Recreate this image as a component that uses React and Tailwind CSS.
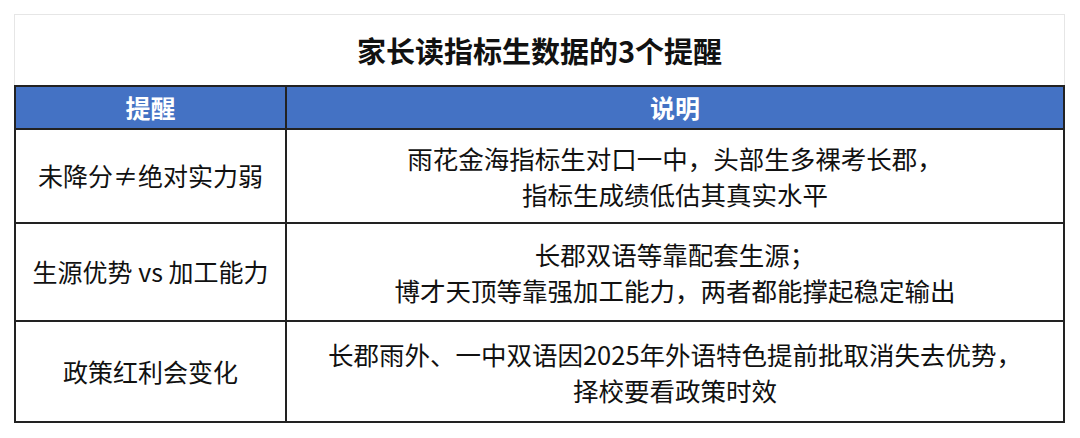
import React from "react";

const font = {
  fontFamily: '"PingFang SC", "Noto Sans CJK SC", "Noto Sans", sans-serif',
};

const rows = [
  {
    h: "h-[94px]",
    left: "未降分≠绝对实力弱",
    right: ["雨花金海指标生对口一中，头部生多裸考长郡，", "指标生成绩低估其真实水平"],
  },
  {
    h: "h-[98px]",
    left: "生源优势 vs 加工能力",
    right: ["长郡双语等靠配套生源；", "博才天顶等靠强加工能力，两者都能撑起稳定输出"],
  },
  {
    h: "h-[101px]",
    left: "政策红利会变化",
    right: ["长郡雨外、一中双语因2025年外语特色提前批取消失去优势，", "择校要看政策时效"],
  },
];

export default function App() {
  return (
    <div className="w-[1080px] h-[438px] bg-white pt-[14px] pl-[14px]" style={font}>
      <div className="w-[1051px]">
        <div className="h-[71px] border border-b-0 border-[#e6e6e6] flex items-center justify-center">
          <h1 className="text-[29px] font-bold text-[#111] leading-none">家长读指标生数据的3个提醒</h1>
        </div>
        <div className="border-2 border-[#222]">
          <div className="flex h-[41px] bg-[#4472c4] text-white font-bold text-[25px]">
            <div className="w-[271px] border-r-2 border-[#222] flex items-center justify-center">提醒</div>
            <div className="flex-1 flex items-center justify-center">说明</div>
          </div>
          {rows.map((r, i) => (
            <div key={i} className={`flex border-t-2 border-[#222] ${r.h} text-[25px] text-[#111]`}>
              <div className="w-[271px] border-r-2 border-[#222] flex items-center justify-center">
                {r.left}
              </div>
              <div className="flex-1 flex flex-col items-center justify-center leading-[36px] text-[25.5px]">
                {r.right.map((t, j) => (
                  <div key={j}>{t}</div>
                ))}
              </div>
            </div>
          ))}
        </div>
      </div>
    </div>
  );
}
